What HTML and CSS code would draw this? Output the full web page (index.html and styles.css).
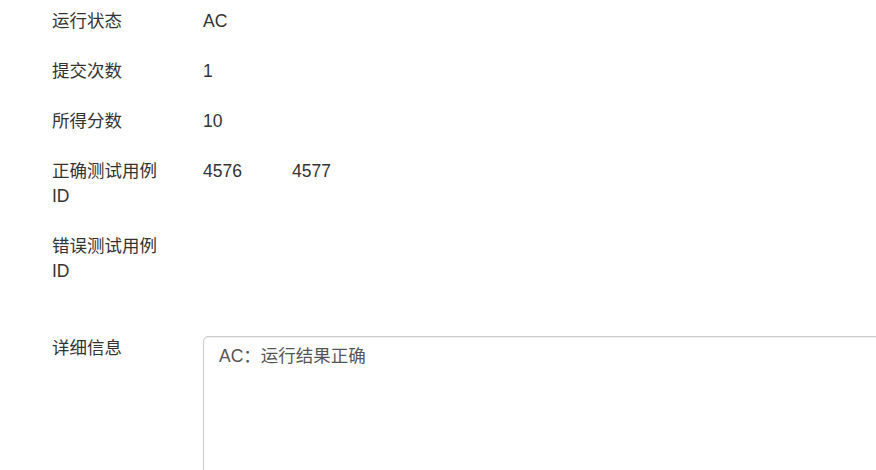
FILE: index.html
```html
<!DOCTYPE html>
<html lang="zh-CN">
<head>
<meta charset="utf-8">
<title>运行结果</title>
<link rel="stylesheet" href="styles.css">
</head>
<body>
<div class="page">
  <div class="row">
    <div class="label">运行状态</div>
    <div class="value">AC</div>
  </div>
  <div class="row">
    <div class="label">提交次数</div>
    <div class="value">1</div>
  </div>
  <div class="row">
    <div class="label">所得分数</div>
    <div class="value">10</div>
  </div>
  <div class="row">
    <div class="label">正确测试用例ID</div>
    <div class="value"><span class="case">4576</span><span class="case">4577</span></div>
  </div>
  <div class="row row-last">
    <div class="label">错误测试用例ID</div>
    <div class="value"></div>
  </div>
  <div class="row">
    <div class="label">详细信息</div>
    <div class="value">
      <textarea class="detail" readonly>AC：运行结果正确</textarea>
    </div>
  </div>
</div>
</body>
</html>
```
FILE: styles.css
```css
html, body {
  margin: 0;
  padding: 0;
  background: #fff;
  overflow: hidden;
}
body {
  font-family: "Liberation Sans", Arial, "Noto Sans CJK SC", sans-serif;
  font-size: 17.5px;
  line-height: 25px;
  color: #333;
}
.page {
  padding: 8.5px 0 0 52px;
}
.row {
  display: flex;
  margin-bottom: 25px;
}
.row-last {
  margin-bottom: 52px;
}
.label {
  width: 116px;
  flex: none;
  margin-right: 35px;
}
.value {
  flex: none;
}
.case {
  display: inline-block;
  width: 89px;
}
.detail {
  display: block;
  box-sizing: border-box;
  width: 720px;
  height: 200px;
  margin: 0;
  padding: 7px 15px;
  border: 1px solid #ccc;
  border-radius: 5px;
  box-shadow: inset 0 1px 1px rgba(0,0,0,.075);
  font: inherit;
  line-height: 25px;
  color: #555;
  resize: none;
  outline: none;
}
```
